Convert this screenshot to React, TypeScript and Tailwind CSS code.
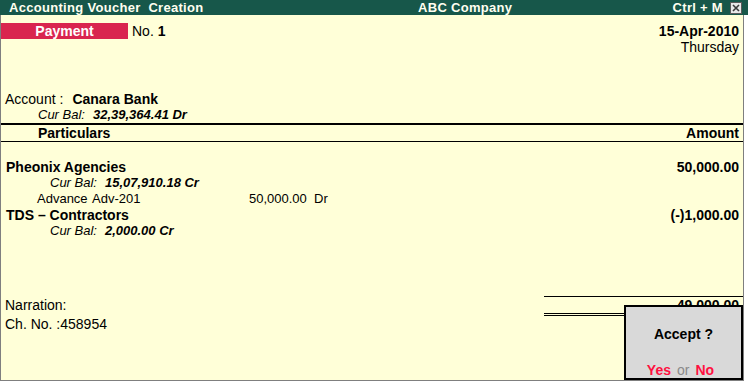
const YELLOW = "bg-[#ffffd8]";

function CloseBox() {
  return (
    <div className="flex h-[12px] w-[12px] items-center justify-center border border-[#5a5a5a] bg-[#e8e8e8]">
      <svg width="8" height="8" viewBox="0 0 8 8">
        <path d="M1 1L7 7M7 1L1 7" stroke="#3a3a3a" strokeWidth="1.6" />
      </svg>
    </div>
  );
}

function TitleBar() {
  return (
    <div className="flex h-[15px] w-[748px] items-center bg-[#17574a] text-[13px] font-bold leading-[15px] tracking-[0.3px] text-[#fffff0]">
      <span className="w-[418px] whitespace-pre pl-[9px]">Accounting Voucher  Creation</span>
      <span>ABC Company</span>
      <span className="flex-1" />
      <span className="mr-[7px]">Ctrl + M</span>
      <CloseBox />
      <span className="w-[6px]" />
    </div>
  );
}

function LedgerRow({
  name,
  amount,
  balance,
}: {
  name: string;
  amount: string;
  balance: string;
}) {
  return (
    <>
      <div className="flex h-4 items-center justify-between pl-[5px] pr-[4px] font-bold">
        <span>{name}</span>
        <span>{amount}</span>
      </div>
      <div className="flex h-4 items-center pl-[49px] text-[13px] italic">
        <span>Cur Bal:</span>
        <span className="ml-[8px] font-bold">{balance}</span>
      </div>
    </>
  );
}

function AcceptBox() {
  return (
    <div className="absolute left-[623px] top-[290px] flex h-[75px] w-[119px] flex-col items-center border-2 border-black bg-[#d9d9d9] pt-[19px]">
      <div className="h-4 font-bold leading-4">Accept ?</div>
      <div className="mr-[6px] mt-[20px] h-4 leading-4">
        <span className="font-bold text-[#ff1040]">Yes</span>
        <span className="mx-[6px] text-[#8a8a8a]">or</span>
        <span className="font-bold text-[#ff1040]">No</span>
      </div>
    </div>
  );
}

export default function App() {
  return (
    <div className="h-[387px] w-[748px] bg-white font-['Liberation_Sans',Arial,sans-serif] text-[14px] leading-4 text-black">
      <TitleBar />
      <div className={`relative flex h-[366px] w-[744px] flex-col border-b border-l border-r border-[#7f7f7f] ${YELLOW}`}>
        {/* Voucher type, number and date */}
        <div className="mt-[8px] flex h-4 items-center">
          <div className="flex h-4 w-[127px] items-center justify-center bg-[#d9254f] font-bold text-white">
            Payment
          </div>
          <span className="ml-[4px]">No.</span>
          <span className="ml-[4px] font-bold">1</span>
          <span className="flex-1" />
          <span className="pr-[4px] font-bold">15-Apr-2010</span>
        </div>
        <div className="flex h-4 justify-end pr-[4px]">Thursday</div>

        {/* Account */}
        <div className="mt-[36px] flex h-4 items-center pl-[4px]">
          <span>Account :</span>
          <span className="ml-[9px] font-bold">Canara Bank</span>
        </div>
        <div className="flex h-4 items-center pl-[37px] text-[13px] italic">
          <span>Cur Bal:</span>
          <span className="ml-[8px] font-bold">32,39,364.41 Dr</span>
        </div>

        {/* Column header */}
        <div className="h-[2px] bg-black" />
        <div className="flex h-4 items-center justify-between pl-[37px] pr-[4px] font-bold">
          <span>Particulars</span>
          <span>Amount</span>
        </div>
        <div className="h-px bg-black" />

        {/* Entries */}
        <div className="mt-[17px] flex flex-col">
          <LedgerRow name="Pheonix Agencies" amount="50,000.00" balance="15,07,910.18 Cr" />
          <div className="flex h-4 items-center text-[13px]">
            <span className="w-[91px] pl-[36px]">Advance</span>
            <span className="w-[157px]">Adv-201</span>
            <span className="whitespace-pre">50,000.00  Dr</span>
          </div>
          <LedgerRow name="TDS – Contractors" amount="(-)1,000.00" balance="2,000.00 Cr" />
        </div>

        {/* Narration and totals */}
        <div className="mt-[57px] flex">
          <div className="flex flex-1 flex-col pl-[4px] pt-px">
            <div className="h-4">Narration:</div>
            <div className="mt-[3px] h-4">Ch. No. :458954</div>
          </div>
          <div className="flex w-[199px] flex-col">
            <div className="h-px bg-black" />
            <div className="h-4 pr-[4px] text-right font-bold">49,000.00</div>
            <div className="h-px bg-black" />
            <div className="h-px" />
            <div className="h-px bg-black" />
          </div>
        </div>

        <AcceptBox />
      </div>
    </div>
  );
}
